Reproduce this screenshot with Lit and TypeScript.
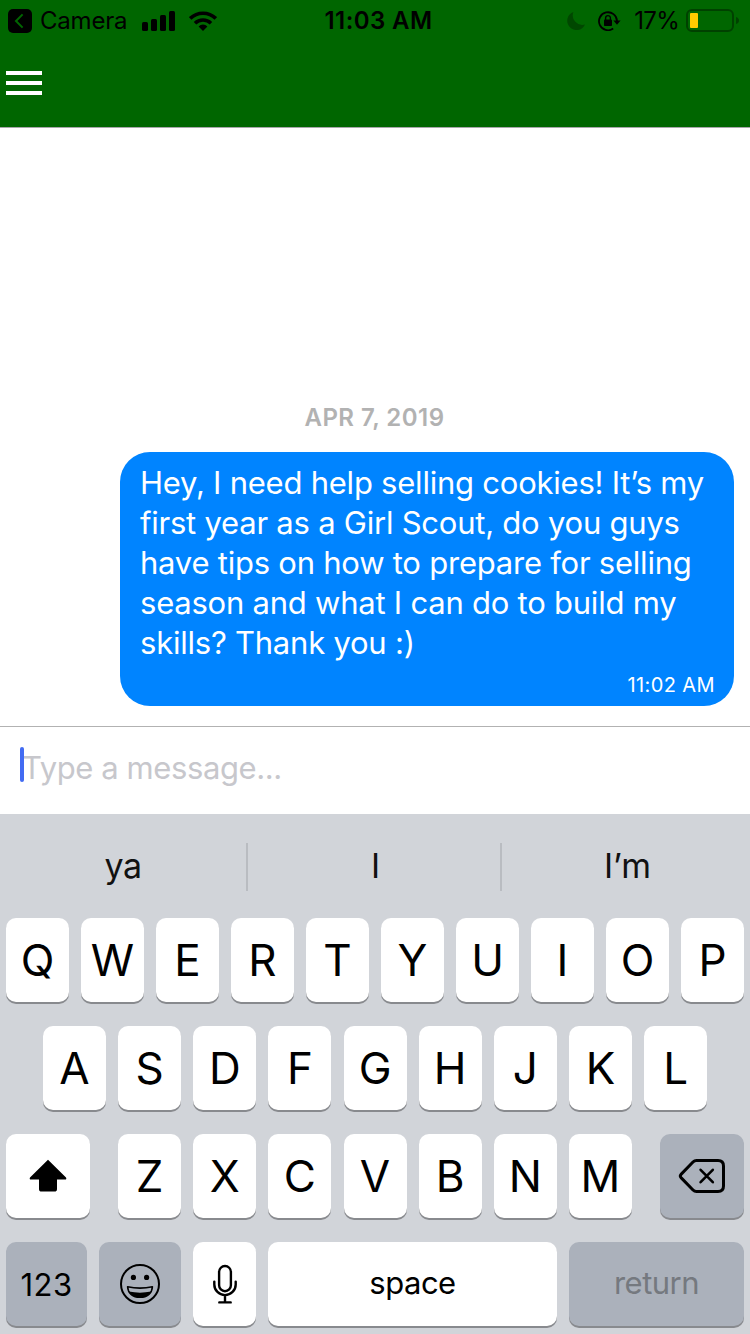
import { LitElement, html, svg, css } from 'lit';
import { customElement, property } from 'lit/decorators.js';
import { classMap } from 'lit/directives/class-map.js';

const icons = {
  shift: svg`<svg width="38" height="34" viewBox="0 0 38 34">
    <path d="M19 .8 37 18.4Q38 20.4 36 20.4H28V30Q28 32.6 25.4 32.6H12.6Q10 32.6 10 30V20.4H2Q0 20.4 1 18.4Z"/>
  </svg>`,
  backspace: svg`<svg width="48" height="36" viewBox="0 0 48 36" fill="none" stroke="#000" stroke-width="3" stroke-linecap="round" stroke-linejoin="round">
    <path d="M18.5 2.5H40Q45.5 2.5 45.5 8V28Q45.5 33.5 40 33.5H18.5Q16.5 33.5 15 32L3 19.6Q1.6 18 3 16.4L15 4Q16.5 2.5 18.5 2.5Z"/>
    <path d="M22.6 11.8 34.8 24.2M34.8 11.8 22.6 24.2" stroke-width="2.6"/>
  </svg>`,
  emoji: svg`<svg width="40" height="40" viewBox="0 0 40 40">
    <circle cx="20" cy="20" r="19" fill="none" stroke="#000" stroke-width="2"/>
    <circle cx="13.4" cy="13.4" r="2.6"/>
    <circle cx="26.6" cy="13.4" r="2.6"/>
    <path d="M7.6 22.7Q20 25.5 32.4 22.7C32 29.5 27 33.3 20 33.3S8 29.5 7.6 22.7Z" fill="none" stroke="#000" stroke-width="1.6" stroke-linejoin="round"/>
    <path d="M8.8 27.6Q20 29.8 31.2 27.6C29.2 31.6 25.2 33.6 20 33.6S10.8 31.6 8.8 27.6Z"/>
  </svg>`,
  mic: svg`<svg width="24" height="40" viewBox="0 0 24 40" fill="none" stroke="#000" stroke-width="2.4" stroke-linecap="round">
    <rect x="6.1" y="2" width="11.8" height="25.2" rx="5.9"/>
    <path d="M1.3 17.6V20.4A10.7 10.7 0 0 0 22.7 20.4V17.6M12 31.3V37.6M6.3 38.4H17.7"/>
  </svg>`
};

@customElement('status-bar')
export class StatusBar extends LitElement {
  static styles = css`
    :host {
      display: grid;
      grid-template-columns: 1fr auto 1fr;
      align-items: center;
      height: 41px;
      padding: 0 11px 0 8px;
      font-size: 24px;
      line-height: 41px;
    }

    .side {
      display: flex;
      align-items: center;
    }

    .right {
      justify-content: flex-end;
    }

    svg {
      display: block;
      flex: none;
    }

    .back {
      margin-right: 8px;
    }

    .app {
      width: 87px;
      letter-spacing: -0.2px;
    }

    .signal {
      margin: 0 14px 0 15px;
    }

    .time {
      font-weight: 600;
      letter-spacing: 0.4px;
      margin-left: 10px;
    }

    .lock {
      margin: 0 13px 0 13px;
    }

    .percent {
      letter-spacing: -0.7px;
    }

    .battery {
      margin-left: 7px;
    }
  `;

  render() {
    return html`
      <div class="side">
        <svg class="back" width="24" height="24" viewBox="0 0 24 24">
          <rect width="24" height="24" rx="5"/>
          <path d="M14.6 5.4 8 12 14.6 18.6" fill="none" stroke="#006600" stroke-width="2"/>
        </svg>
        <span class="app">Camera</span>
        <svg class="signal" width="33" height="20" viewBox="0 0 33 20">
          <rect y="11" width="6" height="9" rx="1.5"/>
          <rect x="9" y="8" width="6" height="12" rx="1.5"/>
          <rect x="18" y="4" width="6" height="16" rx="1.5"/>
          <rect x="27" width="6" height="20" rx="1.5"/>
        </svg>
        <svg width="28" height="20" viewBox="0 0 28 20" fill="none" stroke="#000" stroke-width="3.6">
          <path d="M1.2 7.4A18.4 18.4 0 0 1 26.8 7.4M6 12.2A11.6 11.6 0 0 1 22 12.2"/>
          <path d="M9.6 15.4A6.3 6.3 0 0 1 18.4 15.4L14 20Z" fill="#000" stroke="none"/>
        </svg>
      </div>
      <span class="time">11:03 AM</span>
      <div class="side right">
        <svg width="18" height="18" viewBox="0 0 18 18">
          <path d="M6.4 0A9.3 9.3 0 1 0 18 12.6A9.6 9.6 0 0 1 6.4 0Z" fill="#004700"/>
        </svg>
        <svg class="lock" width="23" height="20" viewBox="0 0 23 20">
          <path d="M15.2 17.6A9 9 0 1 1 19 10" fill="none" stroke="#000" stroke-width="1.8"/>
          <path d="M15.4 9.6H22.6L19 13.8Z"/>
          <rect x="6" y="8.6" width="8" height="6.4" rx=".8"/>
          <path d="M7.6 9V7A2.4 2.4 0 0 1 12.4 7V9" fill="none" stroke="#000" stroke-width="1.4"/>
        </svg>
        <span class="percent">17%</span>
        <svg class="battery" width="53" height="23" viewBox="0 0 53 23">
          <rect x="1" y="1" width="46" height="21" rx="5" fill="none" stroke="#004100" stroke-width="2"/>
          <rect x="4" y="4" width="8" height="15" rx="1" fill="#ffcc00"/>
          <path d="M50 8Q53 9 53 11.5T50 15Z" fill="#004100"/>
        </svg>
      </div>
    `;
  }
}

@customElement('chat-bubble')
export class ChatBubble extends LitElement {
  @property({ type: Array }) lines: string[] = [];
  @property() time = '';

  static styles = css`
    :host {
      display: flex;
      flex-direction: column;
      box-sizing: border-box;
      width: 614px;
      height: 254px;
      padding: 11px 19px 0 20px;
      border-radius: 30px;
      background: #0084ff;
      color: #fff;
    }

    .line {
      font-size: 31px;
      line-height: 40px;
      letter-spacing: -0.23px;
      white-space: nowrap;
    }

    .time {
      margin-top: 10px;
      font-size: 20px;
      line-height: 24px;
      letter-spacing: 0.4px;
      text-align: right;
    }
  `;

  render() {
    return html`
      ${this.lines.map(line => html`<div class="line">${line}</div>`)}
      <div class="time">${this.time}</div>
    `;
  }
}

@customElement('key-cap')
export class KeyCap extends LitElement {
  @property() label = '';
  @property() icon = '';
  @property({ type: Boolean }) dark = false;

  static styles = css`
    :host {
      display: block;
    }

    .key {
      display: flex;
      align-items: center;
      justify-content: center;
      height: 84px;
      border-radius: 10px;
      background: #fff;
      box-shadow: 0 2px 0 #888a8e;
      color: #000;
      font-size: 44px;
      line-height: 84px;
    }

    .dark {
      background: #abb1bb;
    }

    .word {
      font-size: 31px;
      line-height: 82px;
      letter-spacing: -0.5px;
      align-items: flex-start;
    }

    .number {
      line-height: 86px;
      letter-spacing: 0.5px;
    }

    .return {
      color: #75797f;
    }

    svg {
      display: block;
    }
  `;

  render() {
    const classes = {
      key: true,
      dark: this.dark,
      word: this.label.length > 1,
      number: this.label === '123',
      return: this.label === 'return'
    };
    return html`<div class=${classMap(classes)}>${this.icon ? icons[this.icon] : this.label}</div>`;
  }
}

@customElement('key-board')
export class KeyBoard extends LitElement {
  static styles = css`
    :host {
      display: block;
      height: 520px;
      background: #d1d4d9;
    }

    .suggestions {
      display: grid;
      grid-template-columns: 246px 2px 252px 2px 248px;
      align-items: center;
      height: 104px;
      box-sizing: border-box;
      padding-top: 2px;
      font-size: 34px;
      line-height: 46px;
      text-align: center;
      color: #111;
    }

    .word {
      height: 48px;
      letter-spacing: -0.4px;
    }

    .divider ~ .word {
      padding-left: 3px;
      letter-spacing: 0;
    }

    .divider {
      height: 48px;
      background: #b9bcc1;
    }

    .row {
      display: grid;
      column-gap: 12px;
      margin-bottom: 24px;
      padding: 0 6px;
    }

    .top {
      grid-template-columns: repeat(10, 63px);
    }

    .middle {
      grid-template-columns: repeat(9, 63px);
      column-gap: 12.15px;
      padding-left: 43px;
    }

    .lower {
      display: flex;
      justify-content: space-between;
    }

    .letters {
      display: grid;
      grid-template-columns: repeat(7, 63px);
      column-gap: 12.15px;
    }

    .wide {
      width: 84px;
    }

    .bottom {
      grid-template-columns: 81px 82px 63px 289px 175px;
    }
  `;

  render() {
    return html`
      <div class="suggestions">
        <span class="word">ya</span>
        <span class="divider"></span>
        <span class="word">I</span>
        <span class="divider"></span>
        <span class="word">I’m</span>
      </div>
      <div class="row top">${this._keys('QWERTYUIOP')}</div>
      <div class="row middle">${this._keys('ASDFGHJKL')}</div>
      <div class="row lower">
        <key-cap class="wide" icon="shift"></key-cap>
        <div class="letters">${this._keys('ZXCVBNM')}</div>
        <key-cap class="wide" icon="backspace" dark></key-cap>
      </div>
      <div class="row bottom">
        <key-cap label="123" dark></key-cap>
        <key-cap icon="emoji" dark></key-cap>
        <key-cap icon="mic"></key-cap>
        <key-cap label="space"></key-cap>
        <key-cap label="return" dark></key-cap>
      </div>
    `;
  }

  _keys(letters: string) {
    return [...letters].map(letter => html`<key-cap label=${letter}></key-cap>`);
  }
}

@customElement('app-root')
export class AppRoot extends LitElement {
  static styles = css`
    :host {
      display: flex;
      flex-direction: column;
      width: 750px;
      height: 1334px;
      overflow: hidden;
      background: #fff;
      font-family: Inter, "Liberation Sans", sans-serif;
    }

    .header {
      box-sizing: border-box;
      height: 128px;
      border-bottom: 1px solid #a7a7aa;
      background: #006600;
    }

    .menu {
      display: flex;
      flex-direction: column;
      gap: 6px;
      width: 36px;
      margin: 30px 0 0 6px;
    }

    .menu span {
      height: 4px;
      background: #fff;
    }

    .messages {
      display: flex;
      flex-direction: column;
      justify-content: flex-end;
      align-items: flex-end;
      height: 598px;
      box-sizing: border-box;
      padding: 0 16px 20px 0;
    }

    .date {
      align-self: stretch;
      margin: 0 -15px 19px 0;
      font-size: 24px;
      font-weight: 600;
      line-height: 30px;
      letter-spacing: 0.45px;
      text-align: center;
      color: #b2b2b2;
    }

    .composer {
      position: relative;
      box-sizing: border-box;
      height: 88px;
      padding-left: 22px;
      border-top: 1px solid #b2b2b2;
      font-size: 31px;
      line-height: 82px;
      letter-spacing: -0.4px;
      color: #c7c7cc;
    }

    .caret {
      position: absolute;
      left: 20px;
      top: 20px;
      width: 4px;
      height: 35px;
      border-radius: 2px;
      background: #426bf2;
    }
  `;

  render() {
    return html`
      <div class="header">
        <status-bar></status-bar>
        <div class="menu"><span></span><span></span><span></span></div>
      </div>
      <div class="messages">
        <div class="date">APR 7, 2019</div>
        <chat-bubble
          .lines=${[
            'Hey, I need help selling cookies! It’s my',
            'first year as a Girl Scout, do you guys',
            'have tips on how to prepare for selling',
            'season and what I can do to build my',
            'skills? Thank you :)'
          ]}
          time="11:02 AM"
        ></chat-bubble>
      </div>
      <div class="composer">Type a message...<span class="caret"></span></div>
      <key-board></key-board>
    `;
  }
}
